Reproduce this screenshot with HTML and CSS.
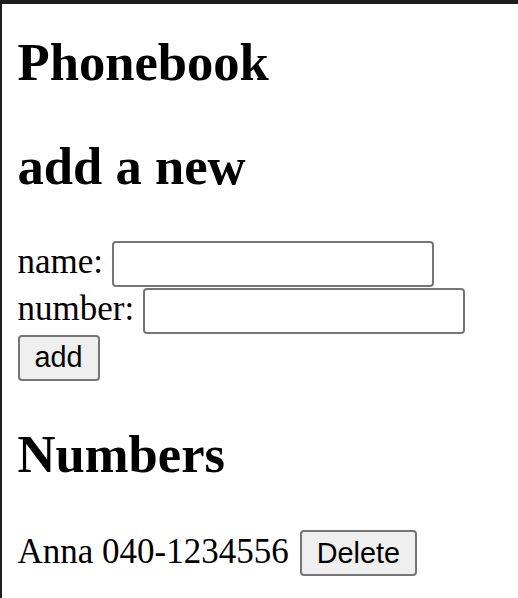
FILE: index.html
```html
<!DOCTYPE html>
<html>
<head>
<meta charset="utf-8">
<title>Phonebook</title>
<link rel="stylesheet" href="styles.css">
</head>
<body>
<div class="page">
  <h2 class="title">Phonebook</h2>
  <h2 class="subtitle">add a new</h2>
  <form class="form">
    <div class="row"><span class="label">name:</span><input class="field" type="text"></div>
    <div class="row"><span class="label">number:</span><input class="field" type="text"></div>
    <div class="row"><button class="btn" type="button">add</button></div>
  </form>
  <h2 class="numbers">Numbers</h2>
  <div class="entry"><span class="entry-text">Anna 040-1234556</span><button class="btn btn-delete" type="button">Delete</button></div>
</div>
</body>
</html>
```

FILE: styles.css
```css
html, body {
  margin: 0;
  padding: 0;
  background: #ffffff;
}
body {
  border-top: 4px solid #1e1e1e;
  border-left: 2px solid #1e1e1e;
  min-height: 100vh;
  box-sizing: border-box;
  font-family: "Liberation Serif", "Times New Roman", serif;
  font-size: 35px;
  color: #000;
}
.page {
  padding-left: 15.5px;
  padding-top: 0.1px;
}
h2 {
  font-size: 52.6px;
  font-weight: bold;
  line-height: 60px;
  margin: 0;
}
.title {
  margin-top: 27.5px;
  margin-bottom: 44.3px;
}
.subtitle {
  margin-bottom: 45px;
}
.form {
  display: flex;
  flex-direction: column;
  align-items: flex-start;
  gap: 1px;
  margin: 0 0 43.5px 0;
}
.row {
  display: flex;
  align-items: baseline;
  gap: 9px;
}
.label {
  line-height: normal;
}
.field {
  box-sizing: border-box;
  width: 322px;
  height: 46px;
  margin: 0;
  padding: 2px 4px;
  border: 2px solid #767676;
  border-radius: 4px;
  background: #fff;
  font-family: "Liberation Sans", Arial, sans-serif;
  font-size: 28.8px;
}
.btn {
  box-sizing: border-box;
  height: 46px;
  margin: 0;
  padding: 0 15px;
  border: 2px solid #767676;
  border-radius: 4px;
  background: #efefef;
  color: #000;
  font-family: "Liberation Sans", Arial, sans-serif;
  font-size: 28.8px;
  line-height: normal;
}
.numbers {
  margin-bottom: 45.8px;
}
.entry {
  display: flex;
  align-items: baseline;
  gap: 11px;
}
.entry-text {
  line-height: normal;
}
```
